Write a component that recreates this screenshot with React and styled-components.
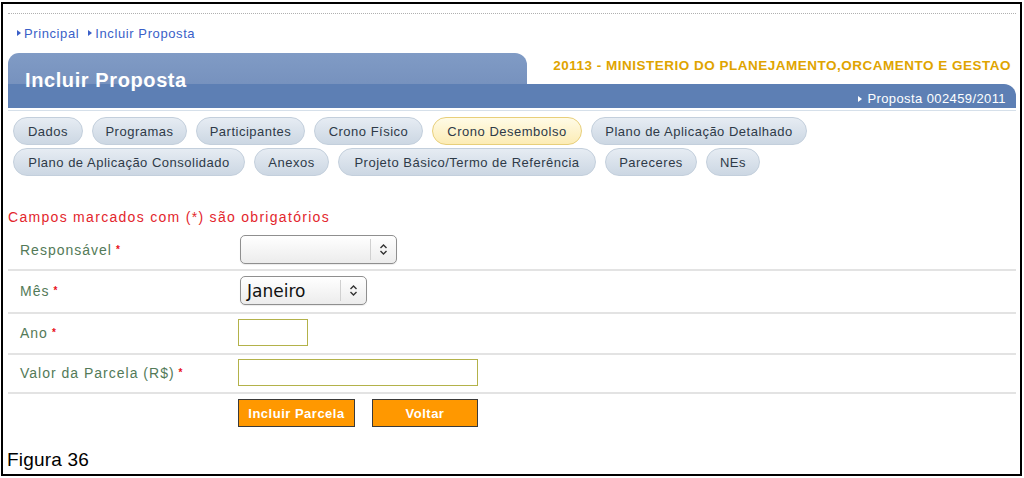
import React from "react";
import styled, { createGlobalStyle } from "styled-components";

const Global = createGlobalStyle`
  html, body { margin: 0; padding: 0; background: #fff; }
  body { font-family: "Liberation Sans", Arial, sans-serif; }
`;

const Frame = styled.div`
  box-sizing: border-box;
  margin: 2px 0 0 1px;
  width: 1021px;
  height: 474px;
  border: 2px solid #000;
  padding: 9px 4px 0 5px;
  display: flex;
  flex-direction: column;
`;

const Dotted = styled.div`
  border-top: 1px dotted #b0b0b0;
  height: 0;
`;

const Crumbs = styled.nav`
  display: flex;
  gap: 9px;
  padding: 9px 0 0 9px;
  height: 20px;
  align-items: center;
  font-size: 13px;
  letter-spacing: 0.6px;
  color: #3a5fc8;
`;

const Crumb = styled.span`
  display: flex;
  align-items: center;
  gap: 3px;
  &::before {
    content: "";
    border-left: 4px solid #3a5fc8;
    border-top: 3px solid transparent;
    border-bottom: 3px solid transparent;
  }
`;

const Header = styled.header`
  margin-top: 10px;
  display: flex;
  flex-direction: column;
`;

const TopLine = styled.div`
  display: flex;
  align-items: flex-end;
  height: 31px;
  position: relative;
  z-index: 1;
`;

const Tab = styled.div`
  box-sizing: border-box;
  width: 519px;
  height: 31px;
  border-radius: 11px 12px 0 0;
  background: linear-gradient(180deg, #809bc5 0%, #7792be 100%);
  padding: 16px 0 0 17px;
  color: #fff;
  font-weight: bold;
  font-size: 20px;
  letter-spacing: 0.6px;
  line-height: 22px;
  white-space: nowrap;
`;

const Ministry = styled.div`
  flex: 1;
  text-align: right;
  padding: 0 5px 11px 0;
  color: #e0a400;
  font-weight: bold;
  font-size: 13.5px;
  letter-spacing: 0.5px;
  white-space: nowrap;
`;

const Band = styled.div`
  height: 24px;
  background: #5d7fb4;
  border-radius: 0 12px 0 0;
  display: flex;
  justify-content: flex-end;
  align-items: flex-end;
  padding: 0 10px 2px 0;
  box-sizing: border-box;
  color: #fff;
  font-size: 13px;
  letter-spacing: 0.4px;
`;

const BandLink = styled.span`
  display: flex;
  align-items: center;
  gap: 5px;
  &::before {
    content: "";
    border-left: 4px solid #fff;
    border-top: 3px solid transparent;
    border-bottom: 3px solid transparent;
  }
`;

const Underline = styled.div`
  margin-top: 2px;
  height: 1px;
  background: #d6e0ea;
`;

const Tabs = styled.div`
  display: flex;
  flex-wrap: wrap;
  gap: 3px 9px;
  padding: 6px 0 0 5px;
  width: 820px;
`;

const Pill = styled.div`
  box-sizing: border-box;
  width: ${(p) => p.$w}px;
  height: 28px;
  border-radius: 14px;
  display: flex;
  align-items: center;
  justify-content: center;
  font-size: 13px;
  letter-spacing: 0.5px;
  color: #2e3a48;
  white-space: nowrap;
  border: 1px solid ${(p) => (p.$active ? "#e8cf7a" : "#c3cfdc")};
  background: ${(p) =>
    p.$active
      ? "linear-gradient(180deg, #fffbe6 0%, #fcecb5 100%)"
      : "linear-gradient(180deg, #e6ecf3 0%, #ccd7e3 100%)"};
`;

const Required = styled.div`
  margin-top: 33px;
  font-size: 14px;
  letter-spacing: 1.3px;
  color: #e3262d;
  white-space: nowrap;
`;

const Form = styled.div`
  margin-top: 5px;
  display: flex;
  flex-direction: column;
`;

const Row = styled.div`
  display: flex;
  align-items: center;
  padding: ${(p) => p.$pad};
  border-bottom: 2px solid #e3e3e3;
`;

const Label = styled.label`
  box-sizing: border-box;
  width: 230px;
  padding-left: 12px;
  font-size: 14px;
  letter-spacing: 1px;
  color: #537a58;
  display: flex;
  align-items: center;
  gap: 4px;
  white-space: nowrap;
`;

const Star = styled.span`
  color: #e8101a;
  font-size: 10px;
  font-weight: bold;
`;

const Select = styled.div`
  box-sizing: border-box;
  margin-left: 2px;
  width: ${(p) => p.$w}px;
  height: 29px;
  border: 1px solid #8f8f8f;
  border-radius: 5px;
  background: linear-gradient(180deg, #ffffff 0%, #ececec 100%);
  display: flex;
  align-items: stretch;
  box-shadow: 0 1px 1px rgba(0,0,0,0.08);
`;

const SelectValue = styled.div`
  flex: 1;
  display: flex;
  align-items: center;
  padding-left: 6px;
  font-family: "DejaVu Sans", "Liberation Sans", sans-serif;
  font-size: 17px;
  color: #111;
`;

const SelectArrow = styled.div`
  width: 25px;
  border-left: 1px solid #d0d0d0;
  margin: 3px 0;
  display: flex;
  align-items: center;
  justify-content: center;
`;

const Input = styled.div`
  box-sizing: border-box;
  width: ${(p) => p.$w}px;
  height: 27px;
  border: 1.5px solid #b3b24a;
  background: #fff;
`;

const Buttons = styled.div`
  display: flex;
  gap: 17px;
  padding: 5px 0 0 230px;
`;

const Button = styled.button`
  box-sizing: border-box;
  width: ${(p) => p.$w}px;
  height: 28px;
  background: #ff9800;
  border: 1.5px solid #3a3a3a;
  color: #fff;
  font-family: "Liberation Sans", Arial, sans-serif;
  font-weight: bold;
  font-size: 13px;
  letter-spacing: 0.5px;
  padding: 0;
  cursor: pointer;
`;

const Caption = styled.div`
  margin-top: auto;
  margin-left: -1px;
  padding: 0 0 3px 0;
  font-size: 19px;
  letter-spacing: 0.2px;
  color: #000;
`;

const Chevrons = () => (
  <svg width="9" height="13" viewBox="0 0 9 13" fill="none" stroke="#333" strokeWidth="1.4">
    <path d="M1.5 5 L4.5 2 L7.5 5" />
    <path d="M1.5 8 L4.5 11 L7.5 8" />
  </svg>
);

const tabsRow = [
  { t: "Dados", w: 70 },
  { t: "Programas", w: 95 },
  { t: "Participantes", w: 109 },
  { t: "Crono Físico", w: 109 },
  { t: "Crono Desembolso", w: 150, active: true },
  { t: "Plano de Aplicação Detalhado", w: 216 },
  { t: "Plano de Aplicação Consolidado", w: 232 },
  { t: "Anexos", w: 75 },
  { t: "Projeto Básico/Termo de Referência", w: 258 },
  { t: "Pareceres", w: 92 },
  { t: "NEs", w: 54 },
];

export default function App() {
  return (
    <>
      <Global />
      <Frame>
        <Dotted />
        <Crumbs>
          <Crumb>Principal</Crumb>
          <Crumb>Incluir Proposta</Crumb>
        </Crumbs>
        <Header>
          <TopLine>
            <Tab>Incluir Proposta</Tab>
            <Ministry>20113 - MINISTERIO DO PLANEJAMENTO,ORCAMENTO E GESTAO</Ministry>
          </TopLine>
          <Band>
            <BandLink>Proposta 002459/2011</BandLink>
          </Band>
          <Underline />
        </Header>
        <Tabs>
          {tabsRow.map((p) => (
            <Pill key={p.t} $w={p.w} $active={p.active}>
              {p.t}
            </Pill>
          ))}
        </Tabs>
        <Required>Campos marcados com (*) são obrigatórios</Required>
        <Form>
          <Row $pad="5px 0">
            <Label>Responsável<Star>*</Star></Label>
            <Select $w={157}>
              <SelectValue />
              <SelectArrow><Chevrons /></SelectArrow>
            </Select>
          </Row>
          <Row $pad="5px 0 7px">
            <Label>Mês<Star>*</Star></Label>
            <Select $w={127}>
              <SelectValue>Janeiro</SelectValue>
              <SelectArrow><Chevrons /></SelectArrow>
            </Select>
          </Row>
          <Row $pad="5px 0 7px">
            <Label>Ano<Star>*</Star></Label>
            <Input $w={70} />
          </Row>
          <Row $pad="4px 0 6px">
            <Label>Valor da Parcela (R$)<Star>*</Star></Label>
            <Input $w={240} />
          </Row>
          <Buttons>
            <Button $w={117}>Incluir Parcela</Button>
            <Button $w={106}>Voltar</Button>
          </Buttons>
        </Form>
        <Caption>Figura 36</Caption>
      </Frame>
    </>
  );
}
